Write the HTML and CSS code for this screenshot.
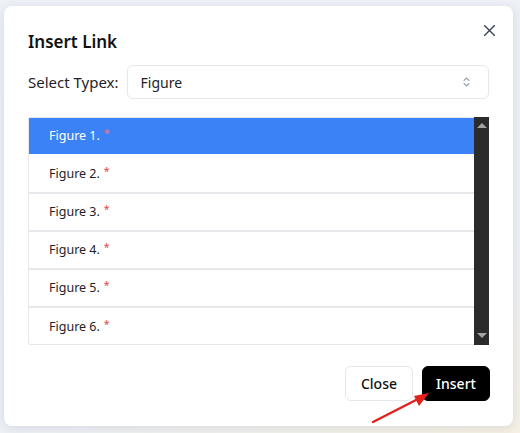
FILE: index.html
```html
<!DOCTYPE html>
<html lang="en">
<head>
<meta charset="utf-8">
<title>Insert Link</title>
<link rel="stylesheet" href="styles.css">
</head>
<body>
<div class="backdrop">
  <div class="modal">
    <button class="close-btn" aria-label="Close">
      <svg width="11" height="11" viewBox="0 0 11 11"><path d="M0.5 0.5 L10.5 10.5 M10.5 0.5 L0.5 10.5" stroke="#374151" stroke-width="1.4" fill="none" stroke-linecap="round"/></svg>
    </button>
    <h2 class="title">Insert Link</h2>
    <div class="type-row">
      <label class="type-label">Select Typex:</label>
      <div class="select">
        <span>Figure</span>
        <svg class="chevrons" width="7" height="10" viewBox="0 0 7 10"><path d="M1 3.5 L3.5 1 L6 3.5 M1 6.5 L3.5 9 L6 6.5" stroke="#9ca3af" stroke-width="1.1" fill="none" stroke-linecap="round" stroke-linejoin="round"/></svg>
      </div>
    </div>
    <div class="list">
      <ul class="items">
        <li class="item selected">Figure 1.<span class="req">*</span></li>
        <li class="item">Figure 2.<span class="req">*</span></li>
        <li class="item">Figure 3.<span class="req">*</span></li>
        <li class="item">Figure 4.<span class="req">*</span></li>
        <li class="item">Figure 5.<span class="req">*</span></li>
        <li class="item">Figure 6.<span class="req">*</span></li>
      </ul>
      <div class="scrollbar">
        <span class="arrow-up"></span>
        <span class="arrow-down"></span>
      </div>
    </div>
    <div class="footer">
      <button class="btn btn-outline">Close</button>
      <button class="btn btn-primary">Insert</button>
    </div>
  </div>
  <svg class="pointer" width="520" height="433" viewBox="0 0 520 433">
    <line x1="373" y1="422" x2="418" y2="399" stroke="#e3201b" stroke-width="2.4" stroke-linecap="round"/>
    <polygon points="429,393 414,396 419,406" fill="#e3201b"/>
  </svg>
</div>
</body>
</html>
```

FILE: styles.css
```css
* { box-sizing: border-box; }
html, body {
  margin: 0;
  height: 433px;
  overflow: hidden;
}
body {
  background: linear-gradient(160deg, #eef1f7 0%, #eef1f6 70%, #f6f1e4 100%);
  font-family: "Noto Sans", "Open Sans", sans-serif;
  color: #111827;
}
.backdrop {
  position: relative;
  padding: 6px 7px 7px 4px;
}
.modal {
  position: relative;
  width: 509px;
  height: 420px;
  background: #fff;
  border-radius: 8px;
  box-shadow: 0 2px 12px rgba(30, 40, 70, 0.12);
  padding: 24px 23px 25px 24px;
  display: flex;
  flex-direction: column;
}
.close-btn {
  position: absolute;
  top: 19px;
  right: 18px;
  width: 11px;
  height: 11px;
  padding: 0;
  border: 0;
  background: none;
  display: flex;
}
.title {
  margin: 0;
  font-size: 17px;
  line-height: 24px;
  font-weight: 600;
  color: #111;
}
.type-row {
  margin-top: 11px;
  display: flex;
  align-items: center;
  gap: 8px;
  height: 34px;
}
.type-label {
  font-size: 15px;
  color: #1f2328;
  white-space: nowrap;
}
.select {
  flex: 1;
  height: 34px;
  margin-right: 1px;
  border: 1px solid #e5e7eb;
  border-radius: 6px;
  display: flex;
  align-items: center;
  justify-content: space-between;
  padding: 0 18px 0 13px;
  font-size: 14px;
  color: #1f2328;
}
.list {
  margin-top: 18px;
  margin-right: 1px;
  display: flex;
  height: 228px;
}
.items {
  flex: 1;
  list-style: none;
  margin: 0;
  padding: 0;
  border: 1px solid #e5e7eb;
  border-right: 0;
  border-radius: 3px 0 0 3px;
}
.item {
  height: 38px;
  padding: 0 0 2px 20px;
  border-bottom: 2px solid #e5e7eb;
  display: flex;
  align-items: center;
  font-size: 12.5px;
  color: #1f2328;
}
.item:last-child {
  border-bottom: 0;
  height: 36px;
  padding-bottom: 0;
}
.item.selected {
  height: 38px;
  background: #3b82f6;
  border-bottom: 2px solid #fff;
  background-clip: padding-box;
  color: #fff;
}
.req {
  color: #e5484d;
  font-size: 10.5px;
  margin-left: 4px;
  position: relative;
  top: -2px;
}
.selected .req {
  color: #fb7185;
}
.scrollbar {
  width: 15px;
  background: #2b2b2b;
  display: flex;
  flex-direction: column;
  justify-content: space-between;
  align-items: center;
  padding: 6px 0 7px;
}
.arrow-up {
  width: 0;
  height: 0;
  border-left: 5px solid transparent;
  border-right: 5px solid transparent;
  border-bottom: 5px solid #a3a3a3;
}
.arrow-down {
  width: 0;
  height: 0;
  border-left: 5px solid transparent;
  border-right: 5px solid transparent;
  border-top: 5px solid #a3a3a3;
}
.footer {
  margin-top: auto;
  display: flex;
  justify-content: flex-end;
  gap: 9px;
}
.btn {
  height: 35px;
  width: 68px;
  border-radius: 6px;
  font-family: inherit;
  font-size: 14px;
  font-weight: 500;
  padding: 0;
}
.btn-outline {
  background: #fff;
  border: 1px solid #e5e7eb;
  color: #111;
}
.btn-primary {
  background: #000;
  border: 1px solid #000;
  color: #fff;
}
.pointer {
  position: absolute;
  left: 0;
  top: 0;
  pointer-events: none;
}
```
